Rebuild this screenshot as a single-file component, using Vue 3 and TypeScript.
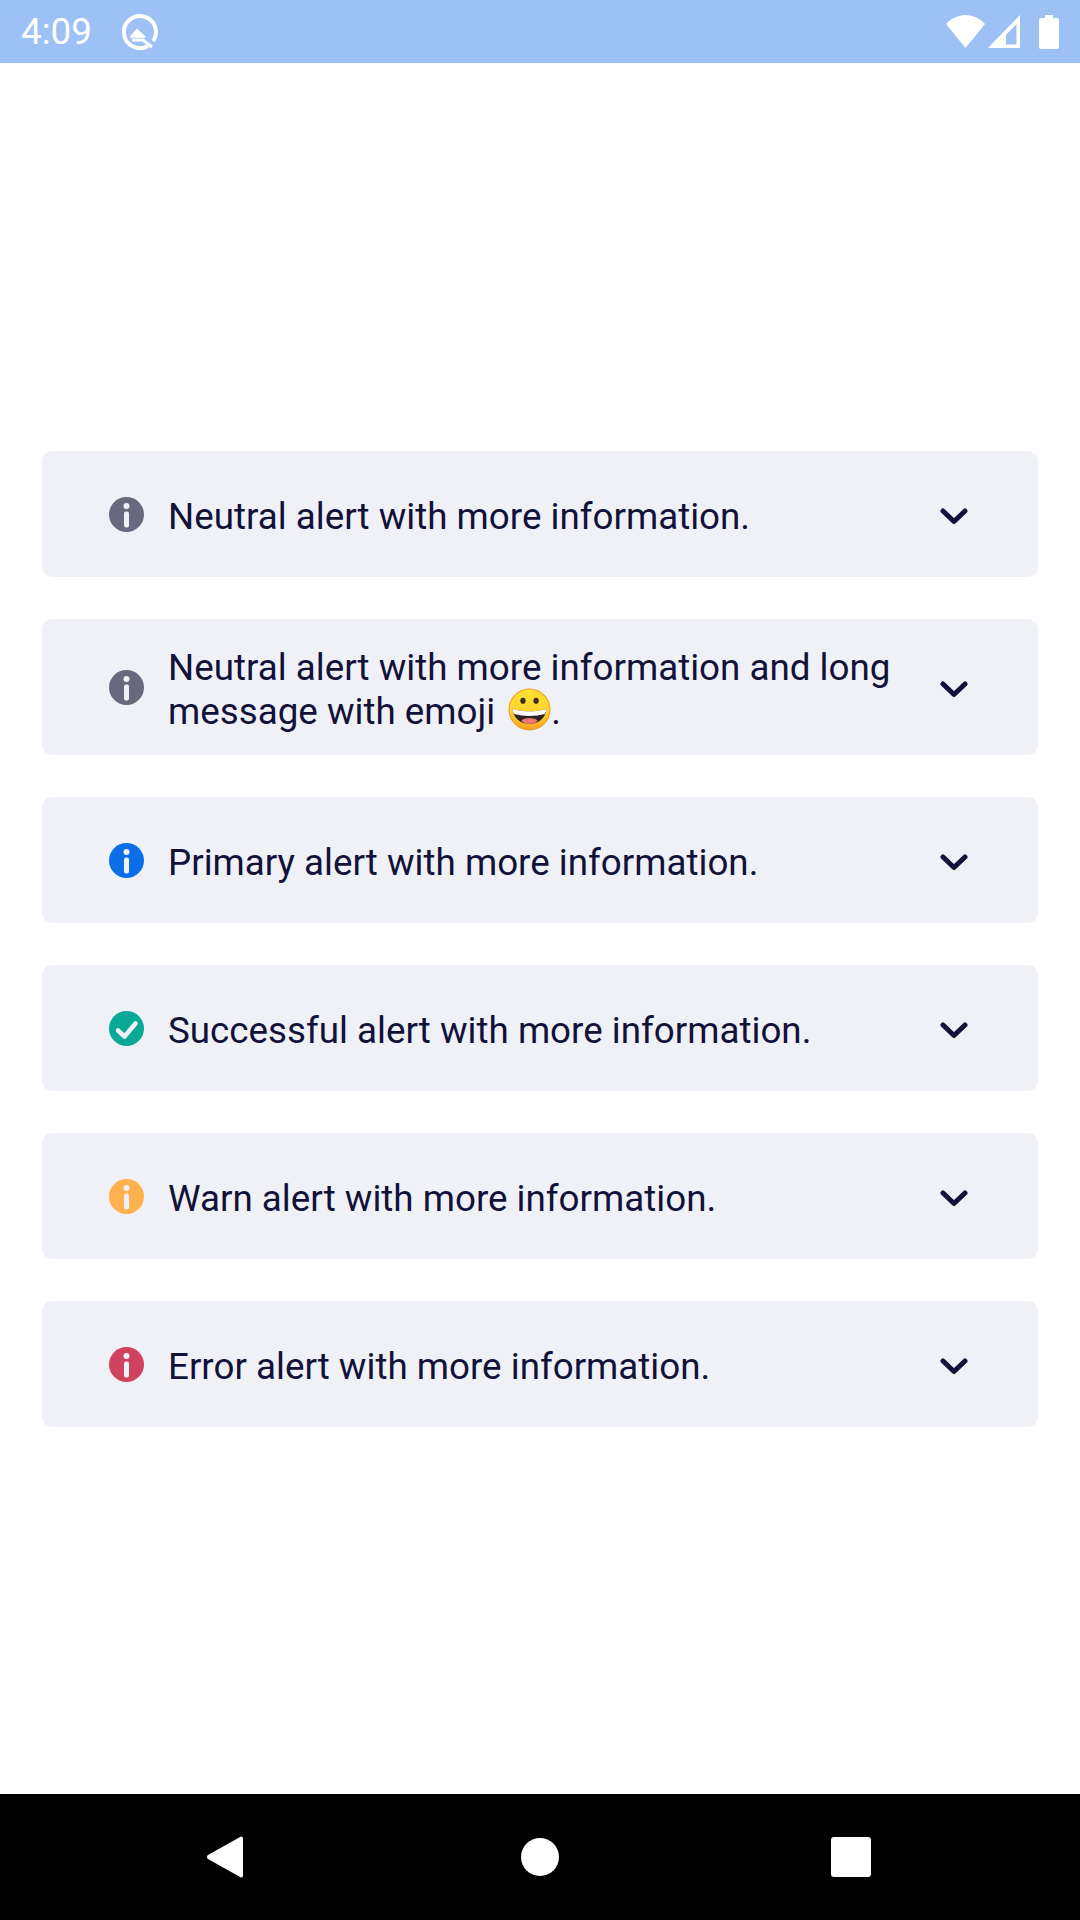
<script setup lang="ts">
interface Alert {
  id: string;
  kind: 'info' | 'check';
  color: string;
  text: string;
  emoji?: boolean;
}

const alerts: Alert[] = [
  { id: 'neutral', kind: 'info', color: '#68687f', text: 'Neutral alert with more information.' },
  { id: 'long', kind: 'info', color: '#68687f', text: 'Neutral alert with more information and long message with emoji ', emoji: true },
  { id: 'primary', kind: 'info', color: '#0b6ee9', text: 'Primary alert with more information.' },
  { id: 'success', kind: 'check', color: '#0aa996', text: 'Successful alert with more information.' },
  { id: 'warn', kind: 'info', color: '#ffb14d', text: 'Warn alert with more information.' },
  { id: 'error', kind: 'info', color: '#d0435f', text: 'Error alert with more information.' },
];
</script>

<template>
  <div class="screen">
    <header class="status-bar">
      <span class="time">4:09</span>
      <svg class="q-logo" width="38" height="38" viewBox="0 0 38 38">
        <path d="M27 32.900A16 16 0 1 1 32.100 28.200" fill="none" stroke="#fff" stroke-width="4" />
        <path d="M16 16.500 24 24H9.500Z" fill="#fff" stroke="#fff" stroke-width="1.500" stroke-linejoin="round" />
        <path d="M11 27H22L31 34" fill="none" stroke="#fff" stroke-width="3" />
      </svg>
      <div class="status-icons">
        <svg width="39" height="33" viewBox="0 0 39 33">
          <path d="M0 9C5 3.500 12 0 19.500 0S34 3.500 39 9L19.500 33Z" fill="#fff" />
        </svg>
        <svg width="32" height="33" viewBox="0 0 32 33">
          <path fill-rule="evenodd" d="M32 0V33H0ZM28.500 9 18 20V29.500H28.500Z" fill="#fff" />
        </svg>
        <svg class="battery" width="20" height="34" viewBox="0 0 20 34">
          <path d="M6 0H14V3H18A2 2 0 0 1 20 5V32A2 2 0 0 1 18 34H2A2 2 0 0 1 0 32V5A2 2 0 0 1 2 3H6Z" fill="#fff" />
        </svg>
      </div>
    </header>

    <main class="alerts">
      <div v-for="alert in alerts" :key="alert.id" class="alert">
        <svg class="alert-icon" width="35" height="35" viewBox="0 0 35 35">
          <circle cx="17.500" cy="17.500" r="17.500" :fill="alert.color" />
          <template v-if="alert.kind === 'info'">
            <circle cx="17.500" cy="9" r="3" fill="#f0f1f7" />
            <rect x="15" y="14.500" width="5" height="16" rx="2" fill="#f0f1f7" />
          </template>
          <path v-else d="M9 19.500 15.500 25.500 26.500 12.500" fill="none" stroke="#f0f1f7" stroke-width="4.500" stroke-linecap="round" stroke-linejoin="round" />
        </svg>
        <p class="message">
          {{ alert.text }}<template v-if="alert.emoji"><svg class="emoji" width="43" height="43" viewBox="0 0 42 42">
            <defs>
              <linearGradient id="face" x1="0" y1="0" x2="0" y2="1">
                <stop offset="0" stop-color="#fee133" />
                <stop offset="0.55" stop-color="#fed42e" />
                <stop offset="1" stop-color="#f6a323" />
              </linearGradient>
            </defs>
            <circle cx="21" cy="21" r="20" fill="url(#face)" stroke="#f39a1c" stroke-width="1" />
            <ellipse cx="14.600" cy="12.500" rx="2.600" ry="3" fill="#3a2a20" />
            <ellipse cx="27.400" cy="12.500" rx="2.600" ry="3" fill="#3a2a20" />
            <path d="M4.500 20.500C15 23.500 27 23.500 37.500 20.500 37 29 30 35 21 35S5 29 4.500 20.500Z" fill="#2f2320" />
            <path d="M4.500 20.500C15 23.500 27 23.500 37.500 20.500 37.300 23 36.500 24.500 36 25.500 27 28 15 28 6 25.500 5.500 24.500 4.700 23 4.500 20.500Z" fill="#fff" />
            <path d="M13 32C16 28.500 26 28.500 29 32 26.500 34.300 24 35 21 35S15.500 34.300 13 32Z" fill="#ed7770" />
          </svg>.</template>
        </p>
        <svg class="chevron" width="28" height="17" viewBox="0 0 28 17">
          <path d="M3 3 14 13.500 25 3" fill="none" stroke="#12113a" stroke-width="5" stroke-linecap="round" stroke-linejoin="round" />
        </svg>
      </div>
    </main>

    <footer class="nav-bar">
      <svg width="38" height="44" viewBox="0 0 38 44">
        <path d="M35 1.500A2 2 0 0 1 37 3V41A2 2 0 0 1 35 42.500L2 24A2.500 2.500 0 0 1 2 20Z" fill="#fff" />
      </svg>
      <span class="home"></span>
      <span class="recents"></span>
    </footer>
  </div>
</template>

<style>
body {
  margin: 0;
  background: #fff;
}
</style>

<style scoped>
.screen {
  display: flex;
  flex-direction: column;
  width: 1080px;
  height: 1920px;
  font-family: Roboto, "Liberation Sans", sans-serif;
  color: #12113a;
  background: #fff;
}

.status-bar {
  display: flex;
  align-items: center;
  height: 63px;
  padding: 0 21px;
  box-sizing: border-box;
  background: #9dc1f5;
  color: #fff;
}

.time {
  font-size: 36.750px;
  width: 100px;
}

.status-icons {
  display: flex;
  align-items: center;
  gap: 3px;
  margin-left: auto;
}

.battery {
  margin-left: 16px;
}

.alerts {
  flex: 1;
  display: flex;
  flex-direction: column;
  gap: 42px;
  padding: 388px 42px 0;
}

.alert {
  display: flex;
  align-items: center;
  min-height: 126px;
  box-sizing: border-box;
  padding: 22px 70px 21px 67px;
  background: #f0f1f7;
  border-radius: 10px;
}

.alert-icon {
  flex: none;
  margin: -1px 24px 0 0;
}

.message {
  flex: 1;
  margin: 0;
  padding-top: 5px;
  font-size: 36.750px;
  line-height: 44px;
}

.emoji {
  vertical-align: -7px;
  margin: -6px 0 0 4px;
}

.chevron {
  flex: none;
  margin: 4px 0 0 23px;
}

.nav-bar {
  display: flex;
  align-items: center;
  height: 126px;
  padding-left: 206px;
  background: #000;
}

.home {
  width: 38px;
  height: 38px;
  margin-left: 277px;
  border-radius: 50%;
  background: #fff;
}

.recents {
  width: 40px;
  height: 40px;
  margin-left: 272px;
  border-radius: 3px;
  background: #fff;
}
</style>
